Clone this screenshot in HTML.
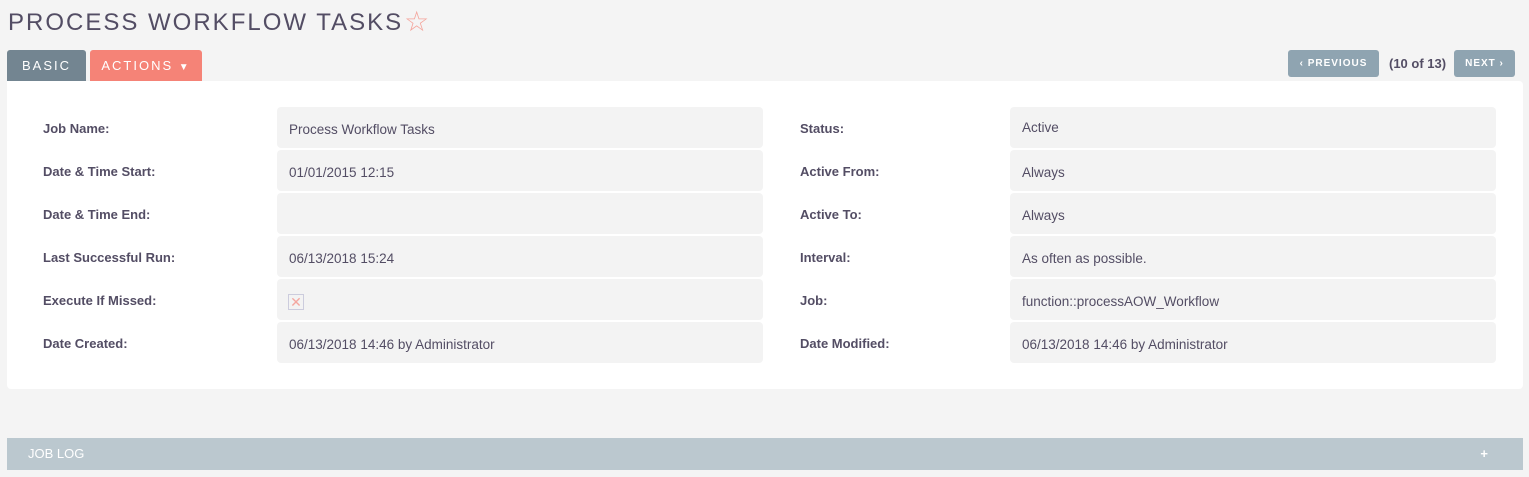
<!DOCTYPE html>
<html><head><style>
body{margin:0;background:#f4f4f4;font-family:"Liberation Sans",sans-serif;color:#534d64;width:1529px;height:477px;overflow:hidden;position:relative}
.a{position:absolute}
h1{position:absolute;left:8px;top:4px;margin:0;font-weight:normal;font-size:24px;letter-spacing:2px;color:#534d64}
.tab{position:absolute;top:50px;height:31px;border-radius:3px 3px 0 0;color:#fff;font-size:13px;letter-spacing:2px;line-height:32px;text-align:center}
.btn{position:absolute;top:50px;height:27px;background:#8fa4b1;border-radius:3px;color:#fff;font-size:10px;font-weight:bold;letter-spacing:1px;line-height:28px;text-align:center}
.panel{position:absolute;left:7px;top:81px;width:1516px;height:308px;background:#fff;border-radius:0 4px 4px 4px}
.lbl{position:absolute;font-size:13px;font-weight:bold;color:#534d64}
.val{position:absolute;background:#f3f3f3;border-radius:4px;height:41px;font-size:13.5px;line-height:46px;padding-left:12px;box-sizing:border-box}
</style></head><body>
<h1>PROCESS WORKFLOW TASKS<span style="color:#f4a49b;font-size:28px;letter-spacing:0;margin-left:1px;position:relative;top:1px">☆</span></h1>
<div class="tab" style="left:7px;width:79px;background:#738591">BASIC</div>
<div class="tab" style="left:90px;width:112px;background:#f58377">ACTIONS <span style="font-size:10px">▼</span></div>
<div class="btn" style="left:1288px;width:91px">‹ PREVIOUS</div>
<div class="a" style="left:1389px;top:56px;font-size:13px;font-weight:bold">(10 of 13)</div>
<div class="btn" style="left:1454px;width:61px">NEXT ›</div>
<div class="panel"></div>
<div class="lbl" style="left:43px;top:121px">Job Name:</div>
<div class="lbl" style="left:43px;top:164px">Date &amp; Time Start:</div>
<div class="lbl" style="left:43px;top:207px">Date &amp; Time End:</div>
<div class="lbl" style="left:43px;top:250px">Last Successful Run:</div>
<div class="lbl" style="left:43px;top:293px">Execute If Missed:</div>
<div class="lbl" style="left:43px;top:336px">Date Created:</div>
<div class="lbl" style="left:800px;top:121px">Status:</div>
<div class="lbl" style="left:800px;top:164px">Active From:</div>
<div class="lbl" style="left:800px;top:207px">Active To:</div>
<div class="lbl" style="left:800px;top:250px">Interval:</div>
<div class="lbl" style="left:800px;top:293px">Job:</div>
<div class="lbl" style="left:800px;top:336px">Date Modified:</div>
<div class="val" style="left:277px;top:107px;width:486px">Process Workflow Tasks</div>
<div class="val" style="left:277px;top:150px;width:486px">01/01/2015 12:15</div>
<div class="val" style="left:277px;top:193px;width:486px"></div>
<div class="val" style="left:277px;top:236px;width:486px">06/13/2018 15:24</div>
<div class="val" style="left:277px;top:279px;width:486px"><span style="display:inline-block;width:14px;height:14px;border:1px solid #ccd;line-height:14px;text-align:center;color:#f4a7a0;font-size:14px;vertical-align:middle;margin-left:-1px">✕</span></div>
<div class="val" style="left:277px;top:322px;width:486px">06/13/2018 14:46 by Administrator</div>
<div class="val" style="left:1010px;top:107px;width:486px;line-height:42px">Active</div>
<div class="val" style="left:1010px;top:150px;width:486px">Always</div>
<div class="val" style="left:1010px;top:193px;width:486px">Always</div>
<div class="val" style="left:1010px;top:236px;width:486px">As often as possible.</div>
<div class="val" style="left:1010px;top:279px;width:486px">function::processAOW_Workflow</div>
<div class="val" style="left:1010px;top:322px;width:486px">06/13/2018 14:46 by Administrator</div>
<div class="a" style="left:7px;top:438px;width:1516px;height:32px;background:#bbc8cf;color:#fff;font-size:13px;line-height:31px"><span style="margin-left:21px">JOB LOG</span><span style="position:absolute;right:35px;font-weight:bold">+</span></div>
</body></html>
